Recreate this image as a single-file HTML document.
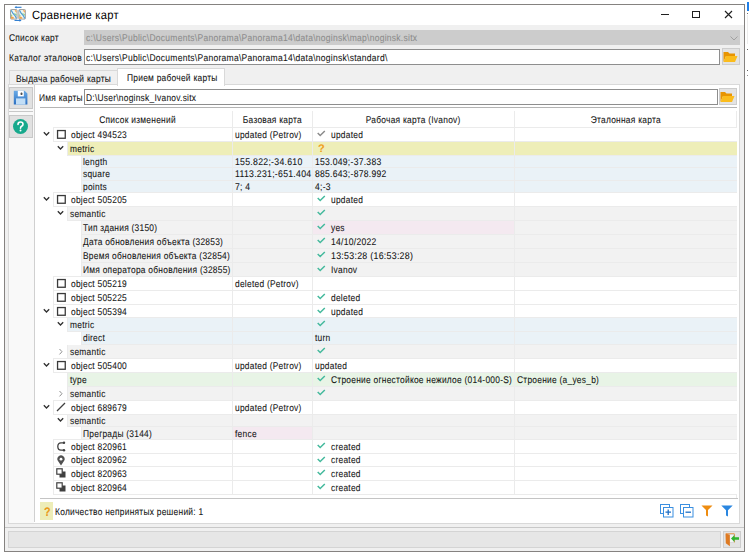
<!DOCTYPE html>
<html><head><meta charset="utf-8"><style>
html,body{margin:0;padding:0;width:750px;height:556px;overflow:hidden;background:#fff;position:relative}
body{font-family:"Liberation Sans", sans-serif;font-size:9.75px;letter-spacing:0.3px;color:#141414;-webkit-text-stroke-width:0.08px;text-rendering:geometricPrecision}
div,svg{position:absolute}
.t{position:absolute;white-space:nowrap;margin-top:2px}
.t>i{font-style:normal;display:inline-block;transform:scaleX(var(--sx,.86));transform-origin:0 50%}
.c>i{transform-origin:50% 50%}
</style></head><body>
<!-- window -->
<div style="left:4px;top:4px;width:741px;height:548px;box-sizing:border-box;border:1px solid #858280;background:#f0f0f0"></div>
<div style="left:5px;top:5px;width:739px;height:20px;background:#fff"></div>
<div style="left:747px;top:2px;width:1.5px;height:9px;background:#1f7fe8"></div>
<div style="left:747px;top:13px;width:1px;height:1px;background:#707070"></div>
<div style="left:747px;top:15px;width:1px;height:29px;background:#ececec"></div>
<div style="left:747px;top:49px;width:1px;height:1px;background:#606060"></div>
<div style="left:747px;top:70px;width:1px;height:1px;background:#606060"></div>
<div style="left:747px;top:75px;width:1px;height:1px;background:#909090"></div>
<!-- title icon -->
<svg width="18" height="18" viewBox="0 0 18 18" style="left:9px;top:6px">
 <defs><g id="mp"><rect x="0.5" y="0.5" width="6.6" height="9.6" rx="0.8" fill="#eef4ee" stroke="#9a9a9a" stroke-width="0.9"/>
 <path d="M1.2 1.2 L3 4.5 L5 6.5 L6.5 9.5" stroke="#4a9ad8" stroke-width="1.2" fill="none"/>
 <path d="M4.5 1.2 L6.5 1.2 L6.5 4 Z" fill="#f3a04a"/>
 <path d="M1 7 L4 8.5 L3.5 9.8 L1 9.8 Z" fill="#f3a04a"/>
 <path d="M3.5 4 L6.5 5 L6.5 7 Z M1 5 L2.5 7 L1 7.5 Z" fill="#8cc98c"/></g></defs>
 <use href="#mp" x="1" y="3"/><use href="#mp" x="9.3" y="3"/>
 <path d="M6.5 1.3 L12.5 1.3" stroke="#2a7bd0" stroke-width="1.1"/><path d="M5.5 1.3 L7.5 0 L7.5 2.6 Z" fill="#2a7bd0"/>
 <path d="M5.5 14.4 L11.5 14.4" stroke="#2a7bd0" stroke-width="1.1"/><path d="M12.5 14.4 L10.5 13.1 L10.5 15.7 Z" fill="#2a7bd0"/>
</svg>
<div class="t" style="left:32px;top:4px;font-size:12px;--sx:.93;color:#000;line-height:19px;-webkit-text-stroke-width:0"><i>Сравнение карт</i></div>
<!-- caption buttons -->
<div style="left:661px;top:14px;width:8px;height:1px;background:#202020"></div>
<div style="left:692px;top:11px;width:8px;height:7px;box-sizing:border-box;border:1.2px solid #202020"></div>
<svg width="9" height="9" viewBox="0 0 9 9" style="left:724px;top:10px"><path d="M1 1 L8 8 M8 1 L1 8" stroke="#202020" stroke-width="1.15"/></svg>

<!-- Список карт -->
<div class="t" style="left:9px;top:30.4px;line-height:14px"><i>Список карт</i></div>
<div style="left:84px;top:30px;width:656px;height:15px;background:#cccccc"></div>
<div class="t" style="left:86px;top:30.4px;line-height:14px;color:#8c8c8c;--sx:.874"><i>c:\Users\Public\Documents\Panorama\Panorama14\data\noginsk\map\noginsk.sitx</i></div>
<svg width="8" height="5" viewBox="0 0 8 5" style="left:730px;top:36px"><polyline points="0.5,0.5 4,4 7.5,0.5" fill="none" stroke="#a0a0a0" stroke-width="1"/></svg>

<!-- Каталог эталонов -->
<div class="t" style="left:9px;top:50px;line-height:14px"><i>Каталог эталонов</i></div>
<div style="left:84px;top:49px;width:636px;height:16px;box-sizing:border-box;border:1px solid #8e8e8e;background:#fff"></div>
<div class="t" style="left:86px;top:50px;line-height:14px;--sx:.874"><i>c:\Users\Public\Documents\Panorama\Panorama14\data\noginsk\standard\</i></div>
<div style="left:722px;top:48px;width:18px;height:17px;box-sizing:border-box;border:1px solid #cdcdcd;background:#e3e3e3"></div>
<svg width="15" height="12" viewBox="0 0 15 12" style="left:723px;top:51px"><path d="M0.5 1 L5 1 L6.5 2.5 L12 2.5 L12 5 L3 5 L0.5 11 Z" fill="#e89400"/><path d="M3 5 L14.5 5 L12 11 L0.5 11 Z" fill="#fbbc1c"/></svg>

<!-- tabs -->
<div style="left:9px;top:70px;width:109px;height:15px;box-sizing:border-box;border:1px solid #d9d9d9;border-bottom:none;background:#f0f0f0"></div>
<div class="t" style="left:16px;top:71px;line-height:14px"><i>Выдача рабочей карты</i></div>
<div style="left:8px;top:84px;width:732px;height:440px;box-sizing:border-box;border:1px solid #d9d9d9;background:#fff"></div>
<div style="left:117px;top:68px;width:108px;height:18px;box-sizing:border-box;border:1px solid #d9d9d9;border-bottom:none;background:#fff"></div>
<div class="t" style="left:127px;top:70px;line-height:14px"><i>Прием рабочей карты</i></div>

<!-- left toolbar -->
<div style="left:9px;top:85px;width:25px;height:438px;background:#f9f9f9"></div>
<div style="left:34px;top:85px;width:1px;height:437px;background:#d0d0d0"></div>
<div style="left:9px;top:87px;width:24px;height:22px;box-sizing:border-box;border:1px solid #c8c8c8;background:#e1e1e1"></div>
<svg width="16" height="16" viewBox="0 0 16 16" style="left:13px;top:90px"><defs><linearGradient id="fg" x1="0" y1="0" x2="0" y2="1"><stop offset="0" stop-color="#69aae6"/><stop offset="1" stop-color="#2c70c2"/></linearGradient></defs><path d="M0.8 0.8 H11.6 L14.4 3.6 V14.6 H0.8 Z" fill="url(#fg)"/><rect x="4.8" y="0.8" width="6" height="5.6" fill="#fff"/><rect x="7.6" y="2.6" width="1.8" height="2.4" rx="0.6" fill="#505050"/><rect x="3" y="8.4" width="9.4" height="6.2" fill="#c2def6"/></svg>
<div style="left:9px;top:111px;width:24px;height:1px;background:#c8c8c8"></div>
<div style="left:9px;top:115px;width:24px;height:23px;box-sizing:border-box;border:1px solid #c8c8c8;background:#e1e1e1"></div>
<div style="left:13px;top:119px;width:15px;height:15px;border-radius:50%;background:#17a98c"></div>
<svg width="15" height="15" viewBox="0 0 15 15" style="left:13px;top:119px"><path d="M5 5.4 Q5 3 7.5 3 Q10 3 10 5.2 Q10 6.6 8.6 7.3 Q7.5 7.9 7.5 9.2" fill="none" stroke="#fff" stroke-width="1.6" stroke-linecap="round"/><circle cx="7.5" cy="11.6" r="1" fill="#fff"/></svg>

<!-- Имя карты -->
<div class="t" style="left:39px;top:90px;line-height:14px"><i>Имя карты</i></div>
<div style="left:84px;top:89px;width:634px;height:16px;box-sizing:border-box;border:1px solid #8e8e8e;background:#fff"></div>
<div class="t" style="left:86px;top:90px;line-height:14px"><i>D:\User\noginsk_Ivanov.sitx</i></div>
<div style="left:719px;top:88px;width:18px;height:17px;box-sizing:border-box;border:1px solid #cdcdcd;background:#e3e3e3"></div>
<svg width="15" height="12" viewBox="0 0 15 12" style="left:720px;top:91px"><path d="M0.5 1 L5 1 L6.5 2.5 L12 2.5 L12 5 L3 5 L0.5 11 Z" fill="#e89400"/><path d="M3 5 L14.5 5 L12 11 L0.5 11 Z" fill="#fbbc1c"/></svg>
<div style="left:40px;top:107px;width:697px;height:1px;background:#b4b4b4"></div>

<!-- grid header -->
<div style="left:232px;top:111px;width:1px;height:16px;background:#ebebeb"></div>
<div style="left:312px;top:111px;width:1px;height:16px;background:#ebebeb"></div>
<div style="left:514px;top:111px;width:1px;height:16px;background:#ebebeb"></div>
<div style="left:736px;top:111px;width:1px;height:387px;background:#ebebeb"></div>
<div style="left:53px;top:127px;width:684px;height:1px;background:#ebebeb"></div>
<div class="t c" style="left:41.5px;width:192px;text-align:center;top:112px;line-height:14px"><i>Список изменений</i></div>
<div class="t c" style="left:233px;width:79px;text-align:center;top:112px;line-height:14px"><i>Базовая карта</i></div>
<div class="t c" style="left:313px;width:201px;text-align:center;top:112px;line-height:14px"><i>Рабочая карта (Ivanov)</i></div>
<div class="t c" style="left:515px;width:221px;text-align:center;top:112px;line-height:14px"><i>Эталонная карта</i></div>

<div style="position:absolute;left:53px;top:128px;width:684px;height:14px;background:#ffffff;border-left:1px solid #ebebeb;border-bottom:1px solid #ebebeb;box-sizing:border-box"></div>
<div style="position:absolute;left:53px;top:127px;width:684px;height:1px;background:#ebebeb"></div>
<div style="position:absolute;left:232px;top:128px;width:1px;height:14px;background:#ebebeb"></div>
<div style="position:absolute;left:312px;top:128px;width:1px;height:14px;background:#ebebeb"></div>
<div style="position:absolute;left:514px;top:128px;width:1px;height:14px;background:#ebebeb"></div>
<svg width="8" height="6" viewBox="0 0 8 6" style="position:absolute;left:43px;top:131.0px"><polyline points="0.8,1.2 3.5,4 6.2,1.2" fill="none" stroke="#303030" stroke-width="1.3"/></svg>
<svg width="10" height="10" viewBox="0 0 10 10" style="position:absolute;left:56px;top:129.3px"><rect x="1.55" y="1.55" width="7.7" height="7.7" fill="none" stroke="#3a3a3a" stroke-width="1.3"/></svg>
<div class="t" style="left:71px;top:127px;line-height:14px"><i>object 494523</i></div>
<div class="t" style="left:235px;top:127px;line-height:14px"><i>updated (Petrov)</i></div>
<svg width="9" height="7" viewBox="0 0 9 7" style="position:absolute;left:317px;top:130.4px"><polyline points="0.7,3 3.2,5.5 7.8,0.9" fill="none" stroke="#8a8a8a" stroke-width="1.45"/></svg>
<div class="t" style="left:331px;top:127px;line-height:14px"><i>updated</i></div>
<div style="position:absolute;left:67px;top:142px;width:670px;height:14px;background:#eeeeb8;border-left:1px solid #ebebeb;border-bottom:1px solid #ebebeb;box-sizing:border-box"></div>
<div style="position:absolute;left:232px;top:142px;width:1px;height:14px;background:#ebebeb"></div>
<div style="position:absolute;left:312px;top:142px;width:1px;height:14px;background:#ebebeb"></div>
<div style="position:absolute;left:514px;top:142px;width:1px;height:14px;background:#ebebeb"></div>
<svg width="8" height="6" viewBox="0 0 8 6" style="position:absolute;left:57px;top:145.0px"><polyline points="0.8,1.2 3.5,4 6.2,1.2" fill="none" stroke="#303030" stroke-width="1.3"/></svg>
<div class="t" style="left:70px;top:141px;line-height:14px"><i>metric</i></div>
<div style="position:absolute;left:318px;top:142px;height:14px;line-height:14px;font-weight:bold;font-size:11px;color:#f0a020">?</div>
<div style="position:absolute;left:81px;top:156px;width:656px;height:12px;background:#eaf2f7;border-left:1px solid #ebebeb;border-bottom:1px solid #ebebeb;box-sizing:border-box"></div>
<div style="position:absolute;left:232px;top:156px;width:1px;height:12px;background:#ebebeb"></div>
<div style="position:absolute;left:312px;top:156px;width:1px;height:12px;background:#ebebeb"></div>
<div style="position:absolute;left:514px;top:156px;width:1px;height:12px;background:#ebebeb"></div>
<div class="t" style="left:83px;top:154px;line-height:14px"><i>length</i></div>
<div class="t" style="left:235px;top:154px;line-height:14px"><i style="--sx:0.895">155.822;-34.610</i></div>
<div class="t" style="left:315px;top:154px;line-height:14px"><i style="--sx:0.88">153.049;-37.383</i></div>
<div style="position:absolute;left:81px;top:168px;width:656px;height:13px;background:#eaf2f7;border-left:1px solid #ebebeb;border-bottom:1px solid #ebebeb;box-sizing:border-box"></div>
<div style="position:absolute;left:232px;top:168px;width:1px;height:13px;background:#ebebeb"></div>
<div style="position:absolute;left:312px;top:168px;width:1px;height:13px;background:#ebebeb"></div>
<div style="position:absolute;left:514px;top:168px;width:1px;height:13px;background:#ebebeb"></div>
<div class="t" style="left:83px;top:166px;line-height:14px"><i>square</i></div>
<div class="t" style="left:235px;top:166px;line-height:14px"><i style="--sx:0.893">1113.231;-651.404</i></div>
<div class="t" style="left:315px;top:166px;line-height:14px"><i style="--sx:0.88">885.643;-878.992</i></div>
<div style="position:absolute;left:81px;top:181px;width:656px;height:12px;background:#eaf2f7;border-left:1px solid #ebebeb;border-bottom:1px solid #ebebeb;box-sizing:border-box"></div>
<div style="position:absolute;left:232px;top:181px;width:1px;height:12px;background:#ebebeb"></div>
<div style="position:absolute;left:312px;top:181px;width:1px;height:12px;background:#ebebeb"></div>
<div style="position:absolute;left:514px;top:181px;width:1px;height:12px;background:#ebebeb"></div>
<div class="t" style="left:83px;top:179px;line-height:14px"><i>points</i></div>
<div class="t" style="left:235px;top:179px;line-height:14px"><i style="--sx:0.88">7; 4</i></div>
<div class="t" style="left:315px;top:179px;line-height:14px"><i style="--sx:0.88">4;-3</i></div>
<div style="position:absolute;left:53px;top:193px;width:684px;height:14px;background:#ffffff;border-left:1px solid #ebebeb;border-bottom:1px solid #ebebeb;box-sizing:border-box"></div>
<div style="position:absolute;left:53px;top:192px;width:684px;height:1px;background:#ebebeb"></div>
<div style="position:absolute;left:232px;top:193px;width:1px;height:14px;background:#ebebeb"></div>
<div style="position:absolute;left:312px;top:193px;width:1px;height:14px;background:#ebebeb"></div>
<div style="position:absolute;left:514px;top:193px;width:1px;height:14px;background:#ebebeb"></div>
<svg width="8" height="6" viewBox="0 0 8 6" style="position:absolute;left:43px;top:196.0px"><polyline points="0.8,1.2 3.5,4 6.2,1.2" fill="none" stroke="#303030" stroke-width="1.3"/></svg>
<svg width="10" height="10" viewBox="0 0 10 10" style="position:absolute;left:56px;top:194.3px"><rect x="1.55" y="1.55" width="7.7" height="7.7" fill="none" stroke="#3a3a3a" stroke-width="1.3"/></svg>
<div class="t" style="left:71px;top:192px;line-height:14px"><i>object 505205</i></div>
<svg width="9" height="7" viewBox="0 0 9 7" style="position:absolute;left:317px;top:195.4px"><polyline points="0.7,3 3.2,5.5 7.8,0.9" fill="none" stroke="#43b99c" stroke-width="1.45"/></svg>
<div class="t" style="left:331px;top:192px;line-height:14px"><i>updated</i></div>
<div style="position:absolute;left:67px;top:207px;width:670px;height:14px;background:#f2f2f2;border-left:1px solid #ebebeb;border-bottom:1px solid #ebebeb;box-sizing:border-box"></div>
<div style="position:absolute;left:232px;top:207px;width:1px;height:14px;background:#ebebeb"></div>
<div style="position:absolute;left:312px;top:207px;width:1px;height:14px;background:#ebebeb"></div>
<div style="position:absolute;left:514px;top:207px;width:1px;height:14px;background:#ebebeb"></div>
<svg width="8" height="6" viewBox="0 0 8 6" style="position:absolute;left:57px;top:210.0px"><polyline points="0.8,1.2 3.5,4 6.2,1.2" fill="none" stroke="#303030" stroke-width="1.3"/></svg>
<div class="t" style="left:70px;top:206px;line-height:14px"><i>semantic</i></div>
<svg width="9" height="7" viewBox="0 0 9 7" style="position:absolute;left:317px;top:209.4px"><polyline points="0.7,3 3.2,5.5 7.8,0.9" fill="none" stroke="#43b99c" stroke-width="1.45"/></svg>
<div style="position:absolute;left:81px;top:221px;width:656px;height:14px;background:#f2f2f2;border-left:1px solid #ebebeb;border-bottom:1px solid #ebebeb;box-sizing:border-box"></div>
<div style="position:absolute;left:313px;top:221px;width:201px;height:13px;background:#f4e9f0"></div>
<div style="position:absolute;left:232px;top:221px;width:1px;height:14px;background:#ebebeb"></div>
<div style="position:absolute;left:312px;top:221px;width:1px;height:14px;background:#ebebeb"></div>
<div style="position:absolute;left:514px;top:221px;width:1px;height:14px;background:#ebebeb"></div>
<div class="t" style="left:83px;top:220px;line-height:14px"><i>Тип здания (3150)</i></div>
<svg width="9" height="7" viewBox="0 0 9 7" style="position:absolute;left:317px;top:223.4px"><polyline points="0.7,3 3.2,5.5 7.8,0.9" fill="none" stroke="#43b99c" stroke-width="1.45"/></svg>
<div class="t" style="left:331px;top:220px;line-height:14px"><i>yes</i></div>
<div style="position:absolute;left:81px;top:235px;width:656px;height:14px;background:#f2f2f2;border-left:1px solid #ebebeb;border-bottom:1px solid #ebebeb;box-sizing:border-box"></div>
<div style="position:absolute;left:232px;top:235px;width:1px;height:14px;background:#ebebeb"></div>
<div style="position:absolute;left:312px;top:235px;width:1px;height:14px;background:#ebebeb"></div>
<div style="position:absolute;left:514px;top:235px;width:1px;height:14px;background:#ebebeb"></div>
<div class="t" style="left:83px;top:234px;line-height:14px"><i>Дата обновления объекта (32853)</i></div>
<svg width="9" height="7" viewBox="0 0 9 7" style="position:absolute;left:317px;top:237.4px"><polyline points="0.7,3 3.2,5.5 7.8,0.9" fill="none" stroke="#43b99c" stroke-width="1.45"/></svg>
<div class="t" style="left:331px;top:234px;line-height:14px"><i style="--sx:0.88">14/10/2022</i></div>
<div style="position:absolute;left:81px;top:249px;width:656px;height:14px;background:#f2f2f2;border-left:1px solid #ebebeb;border-bottom:1px solid #ebebeb;box-sizing:border-box"></div>
<div style="position:absolute;left:232px;top:249px;width:1px;height:14px;background:#ebebeb"></div>
<div style="position:absolute;left:312px;top:249px;width:1px;height:14px;background:#ebebeb"></div>
<div style="position:absolute;left:514px;top:249px;width:1px;height:14px;background:#ebebeb"></div>
<div class="t" style="left:83px;top:248px;line-height:14px"><i>Время обновления объекта (32854)</i></div>
<svg width="9" height="7" viewBox="0 0 9 7" style="position:absolute;left:317px;top:251.4px"><polyline points="0.7,3 3.2,5.5 7.8,0.9" fill="none" stroke="#43b99c" stroke-width="1.45"/></svg>
<div class="t" style="left:331px;top:248px;line-height:14px"><i style="--sx:0.905">13:53:28 (16:53:28)</i></div>
<div style="position:absolute;left:81px;top:263px;width:656px;height:14px;background:#f2f2f2;border-left:1px solid #ebebeb;border-bottom:1px solid #ebebeb;box-sizing:border-box"></div>
<div style="position:absolute;left:232px;top:263px;width:1px;height:14px;background:#ebebeb"></div>
<div style="position:absolute;left:312px;top:263px;width:1px;height:14px;background:#ebebeb"></div>
<div style="position:absolute;left:514px;top:263px;width:1px;height:14px;background:#ebebeb"></div>
<div class="t" style="left:83px;top:262px;line-height:14px"><i>Имя оператора обновления (32855)</i></div>
<svg width="9" height="7" viewBox="0 0 9 7" style="position:absolute;left:317px;top:265.4px"><polyline points="0.7,3 3.2,5.5 7.8,0.9" fill="none" stroke="#43b99c" stroke-width="1.45"/></svg>
<div class="t" style="left:331px;top:262px;line-height:14px"><i>Ivanov</i></div>
<div style="position:absolute;left:53px;top:277px;width:684px;height:14px;background:#ffffff;border-left:1px solid #ebebeb;border-bottom:1px solid #ebebeb;box-sizing:border-box"></div>
<div style="position:absolute;left:53px;top:276px;width:684px;height:1px;background:#ebebeb"></div>
<div style="position:absolute;left:232px;top:277px;width:1px;height:14px;background:#ebebeb"></div>
<div style="position:absolute;left:312px;top:277px;width:1px;height:14px;background:#ebebeb"></div>
<div style="position:absolute;left:514px;top:277px;width:1px;height:14px;background:#ebebeb"></div>
<svg width="10" height="10" viewBox="0 0 10 10" style="position:absolute;left:56px;top:278.3px"><rect x="1.55" y="1.55" width="7.7" height="7.7" fill="none" stroke="#3a3a3a" stroke-width="1.3"/></svg>
<div class="t" style="left:71px;top:276px;line-height:14px"><i>object 505219</i></div>
<div class="t" style="left:235px;top:276px;line-height:14px"><i>deleted (Petrov)</i></div>
<div style="position:absolute;left:53px;top:291px;width:684px;height:14px;background:#ffffff;border-left:1px solid #ebebeb;border-bottom:1px solid #ebebeb;box-sizing:border-box"></div>
<div style="position:absolute;left:53px;top:290px;width:684px;height:1px;background:#ebebeb"></div>
<div style="position:absolute;left:232px;top:291px;width:1px;height:14px;background:#ebebeb"></div>
<div style="position:absolute;left:312px;top:291px;width:1px;height:14px;background:#ebebeb"></div>
<div style="position:absolute;left:514px;top:291px;width:1px;height:14px;background:#ebebeb"></div>
<svg width="10" height="10" viewBox="0 0 10 10" style="position:absolute;left:56px;top:292.3px"><rect x="1.55" y="1.55" width="7.7" height="7.7" fill="none" stroke="#3a3a3a" stroke-width="1.3"/></svg>
<div class="t" style="left:71px;top:290px;line-height:14px"><i>object 505225</i></div>
<svg width="9" height="7" viewBox="0 0 9 7" style="position:absolute;left:317px;top:293.4px"><polyline points="0.7,3 3.2,5.5 7.8,0.9" fill="none" stroke="#43b99c" stroke-width="1.45"/></svg>
<div class="t" style="left:331px;top:290px;line-height:14px"><i>deleted</i></div>
<div style="position:absolute;left:53px;top:305px;width:684px;height:13px;background:#ffffff;border-left:1px solid #ebebeb;border-bottom:1px solid #ebebeb;box-sizing:border-box"></div>
<div style="position:absolute;left:53px;top:304px;width:684px;height:1px;background:#ebebeb"></div>
<div style="position:absolute;left:232px;top:305px;width:1px;height:13px;background:#ebebeb"></div>
<div style="position:absolute;left:312px;top:305px;width:1px;height:13px;background:#ebebeb"></div>
<div style="position:absolute;left:514px;top:305px;width:1px;height:13px;background:#ebebeb"></div>
<svg width="8" height="6" viewBox="0 0 8 6" style="position:absolute;left:43px;top:307.5px"><polyline points="0.8,1.2 3.5,4 6.2,1.2" fill="none" stroke="#303030" stroke-width="1.3"/></svg>
<svg width="10" height="10" viewBox="0 0 10 10" style="position:absolute;left:56px;top:305.8px"><rect x="1.55" y="1.55" width="7.7" height="7.7" fill="none" stroke="#3a3a3a" stroke-width="1.3"/></svg>
<div class="t" style="left:71px;top:304px;line-height:14px"><i>object 505394</i></div>
<svg width="9" height="7" viewBox="0 0 9 7" style="position:absolute;left:317px;top:306.9px"><polyline points="0.7,3 3.2,5.5 7.8,0.9" fill="none" stroke="#43b99c" stroke-width="1.45"/></svg>
<div class="t" style="left:331px;top:304px;line-height:14px"><i>updated</i></div>
<div style="position:absolute;left:67px;top:318px;width:670px;height:14px;background:#eaf2f7;border-left:1px solid #ebebeb;border-bottom:1px solid #ebebeb;box-sizing:border-box"></div>
<div style="position:absolute;left:232px;top:318px;width:1px;height:14px;background:#ebebeb"></div>
<div style="position:absolute;left:312px;top:318px;width:1px;height:14px;background:#ebebeb"></div>
<div style="position:absolute;left:514px;top:318px;width:1px;height:14px;background:#ebebeb"></div>
<svg width="8" height="6" viewBox="0 0 8 6" style="position:absolute;left:57px;top:321.0px"><polyline points="0.8,1.2 3.5,4 6.2,1.2" fill="none" stroke="#303030" stroke-width="1.3"/></svg>
<div class="t" style="left:70px;top:317px;line-height:14px"><i>metric</i></div>
<svg width="9" height="7" viewBox="0 0 9 7" style="position:absolute;left:317px;top:320.4px"><polyline points="0.7,3 3.2,5.5 7.8,0.9" fill="none" stroke="#43b99c" stroke-width="1.45"/></svg>
<div style="position:absolute;left:81px;top:332px;width:656px;height:13px;background:#eaf2f7;border-left:1px solid #ebebeb;border-bottom:1px solid #ebebeb;box-sizing:border-box"></div>
<div style="position:absolute;left:232px;top:332px;width:1px;height:13px;background:#ebebeb"></div>
<div style="position:absolute;left:312px;top:332px;width:1px;height:13px;background:#ebebeb"></div>
<div style="position:absolute;left:514px;top:332px;width:1px;height:13px;background:#ebebeb"></div>
<div class="t" style="left:83px;top:330px;line-height:14px"><i>direct</i></div>
<div class="t" style="left:315px;top:330px;line-height:14px"><i>turn</i></div>
<div style="position:absolute;left:67px;top:345px;width:670px;height:14px;background:#f2f2f2;border-left:1px solid #ebebeb;border-bottom:1px solid #ebebeb;box-sizing:border-box"></div>
<div style="position:absolute;left:232px;top:345px;width:1px;height:14px;background:#ebebeb"></div>
<div style="position:absolute;left:312px;top:345px;width:1px;height:14px;background:#ebebeb"></div>
<div style="position:absolute;left:514px;top:345px;width:1px;height:14px;background:#ebebeb"></div>
<svg width="6" height="8" viewBox="0 0 6 8" style="position:absolute;left:58px;top:348.0px"><polyline points="1.5,1 4,3.7 1.5,6.4" fill="none" stroke="#909090" stroke-width="1"/></svg>
<div class="t" style="left:70px;top:344px;line-height:14px"><i>semantic</i></div>
<svg width="9" height="7" viewBox="0 0 9 7" style="position:absolute;left:317px;top:347.4px"><polyline points="0.7,3 3.2,5.5 7.8,0.9" fill="none" stroke="#43b99c" stroke-width="1.45"/></svg>
<div style="position:absolute;left:53px;top:359px;width:684px;height:14px;background:#ffffff;border-left:1px solid #ebebeb;border-bottom:1px solid #ebebeb;box-sizing:border-box"></div>
<div style="position:absolute;left:53px;top:358px;width:684px;height:1px;background:#ebebeb"></div>
<div style="position:absolute;left:232px;top:359px;width:1px;height:14px;background:#ebebeb"></div>
<div style="position:absolute;left:312px;top:359px;width:1px;height:14px;background:#ebebeb"></div>
<div style="position:absolute;left:514px;top:359px;width:1px;height:14px;background:#ebebeb"></div>
<svg width="8" height="6" viewBox="0 0 8 6" style="position:absolute;left:43px;top:362.0px"><polyline points="0.8,1.2 3.5,4 6.2,1.2" fill="none" stroke="#303030" stroke-width="1.3"/></svg>
<svg width="10" height="10" viewBox="0 0 10 10" style="position:absolute;left:56px;top:360.3px"><rect x="1.55" y="1.55" width="7.7" height="7.7" fill="none" stroke="#3a3a3a" stroke-width="1.3"/></svg>
<div class="t" style="left:71px;top:358px;line-height:14px"><i>object 505400</i></div>
<div class="t" style="left:235px;top:358px;line-height:14px"><i>updated (Petrov)</i></div>
<div class="t" style="left:315px;top:358px;line-height:14px"><i>updated</i></div>
<div style="position:absolute;left:67px;top:373px;width:670px;height:14px;background:#e8f4e6;border-left:1px solid #ebebeb;border-bottom:1px solid #ebebeb;box-sizing:border-box"></div>
<div style="position:absolute;left:232px;top:373px;width:1px;height:14px;background:#ebebeb"></div>
<div style="position:absolute;left:312px;top:373px;width:1px;height:14px;background:#ebebeb"></div>
<div style="position:absolute;left:514px;top:373px;width:1px;height:14px;background:#ebebeb"></div>
<div class="t" style="left:70px;top:372px;line-height:14px"><i>type</i></div>
<svg width="9" height="7" viewBox="0 0 9 7" style="position:absolute;left:317px;top:375.4px"><polyline points="0.7,3 3.2,5.5 7.8,0.9" fill="none" stroke="#43b99c" stroke-width="1.45"/></svg>
<div class="t" style="left:331px;top:372px;line-height:14px"><i>Строение огнестойкое нежилое (014-000-S)</i></div>
<div class="t" style="left:517px;top:372px;line-height:14px"><i>Строение (a_yes_b)</i></div>
<div style="position:absolute;left:67px;top:387px;width:670px;height:14px;background:#f2f2f2;border-left:1px solid #ebebeb;border-bottom:1px solid #ebebeb;box-sizing:border-box"></div>
<div style="position:absolute;left:232px;top:387px;width:1px;height:14px;background:#ebebeb"></div>
<div style="position:absolute;left:312px;top:387px;width:1px;height:14px;background:#ebebeb"></div>
<div style="position:absolute;left:514px;top:387px;width:1px;height:14px;background:#ebebeb"></div>
<svg width="6" height="8" viewBox="0 0 6 8" style="position:absolute;left:58px;top:390.0px"><polyline points="1.5,1 4,3.7 1.5,6.4" fill="none" stroke="#909090" stroke-width="1"/></svg>
<div class="t" style="left:70px;top:386px;line-height:14px"><i>semantic</i></div>
<svg width="9" height="7" viewBox="0 0 9 7" style="position:absolute;left:317px;top:389.4px"><polyline points="0.7,3 3.2,5.5 7.8,0.9" fill="none" stroke="#43b99c" stroke-width="1.45"/></svg>
<div style="position:absolute;left:53px;top:401px;width:684px;height:14px;background:#ffffff;border-left:1px solid #ebebeb;border-bottom:1px solid #ebebeb;box-sizing:border-box"></div>
<div style="position:absolute;left:53px;top:400px;width:684px;height:1px;background:#ebebeb"></div>
<div style="position:absolute;left:232px;top:401px;width:1px;height:14px;background:#ebebeb"></div>
<div style="position:absolute;left:312px;top:401px;width:1px;height:14px;background:#ebebeb"></div>
<div style="position:absolute;left:514px;top:401px;width:1px;height:14px;background:#ebebeb"></div>
<svg width="8" height="6" viewBox="0 0 8 6" style="position:absolute;left:43px;top:404.0px"><polyline points="0.8,1.2 3.5,4 6.2,1.2" fill="none" stroke="#303030" stroke-width="1.3"/></svg>
<svg width="10" height="10" viewBox="0 0 10 10" style="position:absolute;left:56px;top:402px"><line x1="1" y1="9" x2="9" y2="1" stroke="#404040" stroke-width="1.3"/></svg>
<div class="t" style="left:71px;top:400px;line-height:14px"><i>object 689679</i></div>
<div class="t" style="left:235px;top:400px;line-height:14px"><i>updated (Petrov)</i></div>
<div style="position:absolute;left:67px;top:415px;width:670px;height:12px;background:#f2f2f2;border-left:1px solid #ebebeb;border-bottom:1px solid #ebebeb;box-sizing:border-box"></div>
<div style="position:absolute;left:232px;top:415px;width:1px;height:12px;background:#ebebeb"></div>
<div style="position:absolute;left:312px;top:415px;width:1px;height:12px;background:#ebebeb"></div>
<div style="position:absolute;left:514px;top:415px;width:1px;height:12px;background:#ebebeb"></div>
<svg width="8" height="6" viewBox="0 0 8 6" style="position:absolute;left:57px;top:417.0px"><polyline points="0.8,1.2 3.5,4 6.2,1.2" fill="none" stroke="#303030" stroke-width="1.3"/></svg>
<div class="t" style="left:70px;top:413px;line-height:14px"><i>semantic</i></div>
<div style="position:absolute;left:81px;top:427px;width:656px;height:13px;background:#f2f2f2;border-left:1px solid #ebebeb;border-bottom:1px solid #ebebeb;box-sizing:border-box"></div>
<div style="position:absolute;left:233px;top:427px;width:79px;height:12px;background:#f4e9f0"></div>
<div style="position:absolute;left:232px;top:427px;width:1px;height:13px;background:#ebebeb"></div>
<div style="position:absolute;left:312px;top:427px;width:1px;height:13px;background:#ebebeb"></div>
<div style="position:absolute;left:514px;top:427px;width:1px;height:13px;background:#ebebeb"></div>
<div class="t" style="left:83px;top:426px;line-height:14px"><i>Преграды (3144)</i></div>
<div class="t" style="left:235px;top:426px;line-height:14px"><i>fence</i></div>
<div style="position:absolute;left:53px;top:440px;width:684px;height:14px;background:#ffffff;border-left:1px solid #ebebeb;border-bottom:1px solid #ebebeb;box-sizing:border-box"></div>
<div style="position:absolute;left:53px;top:439px;width:684px;height:1px;background:#ebebeb"></div>
<div style="position:absolute;left:232px;top:440px;width:1px;height:14px;background:#ebebeb"></div>
<div style="position:absolute;left:312px;top:440px;width:1px;height:14px;background:#ebebeb"></div>
<div style="position:absolute;left:514px;top:440px;width:1px;height:14px;background:#ebebeb"></div>
<svg width="10" height="11" viewBox="0 0 10 11" style="position:absolute;left:56px;top:441px"><path d="M8 1.8 L5 1.8 Q1.8 2 1.8 5.5 Q1.8 9 5 9.2 L8 9.2" fill="none" stroke="#404040" stroke-width="1.3"/><circle cx="8" cy="1.8" r="1.2" fill="#404040"/><circle cx="8" cy="9.2" r="1.2" fill="#404040"/></svg>
<div class="t" style="left:71px;top:439px;line-height:14px"><i>object 820961</i></div>
<svg width="9" height="7" viewBox="0 0 9 7" style="position:absolute;left:317px;top:442.4px"><polyline points="0.7,3 3.2,5.5 7.8,0.9" fill="none" stroke="#43b99c" stroke-width="1.45"/></svg>
<div class="t" style="left:331px;top:439px;line-height:14px"><i>created</i></div>
<div style="position:absolute;left:53px;top:454px;width:684px;height:13px;background:#ffffff;border-left:1px solid #ebebeb;border-bottom:1px solid #ebebeb;box-sizing:border-box"></div>
<div style="position:absolute;left:53px;top:453px;width:684px;height:1px;background:#ebebeb"></div>
<div style="position:absolute;left:232px;top:454px;width:1px;height:13px;background:#ebebeb"></div>
<div style="position:absolute;left:312px;top:454px;width:1px;height:13px;background:#ebebeb"></div>
<div style="position:absolute;left:514px;top:454px;width:1px;height:13px;background:#ebebeb"></div>
<svg width="10" height="11" viewBox="0 0 10 11" style="position:absolute;left:56px;top:455px"><path d="M5 10.6 L2 6 A3.6 3.6 0 1 1 8 6 Z" fill="#505050"/><circle cx="5" cy="4.2" r="1.4" fill="#fff"/></svg>
<div class="t" style="left:71px;top:452px;line-height:14px"><i>object 820962</i></div>
<svg width="9" height="7" viewBox="0 0 9 7" style="position:absolute;left:317px;top:455.9px"><polyline points="0.7,3 3.2,5.5 7.8,0.9" fill="none" stroke="#43b99c" stroke-width="1.45"/></svg>
<div class="t" style="left:331px;top:452px;line-height:14px"><i>created</i></div>
<div style="position:absolute;left:53px;top:467px;width:684px;height:14px;background:#ffffff;border-left:1px solid #ebebeb;border-bottom:1px solid #ebebeb;box-sizing:border-box"></div>
<div style="position:absolute;left:53px;top:466px;width:684px;height:1px;background:#ebebeb"></div>
<div style="position:absolute;left:232px;top:467px;width:1px;height:14px;background:#ebebeb"></div>
<div style="position:absolute;left:312px;top:467px;width:1px;height:14px;background:#ebebeb"></div>
<div style="position:absolute;left:514px;top:467px;width:1px;height:14px;background:#ebebeb"></div>
<svg width="10" height="10" viewBox="0 0 10 10" style="position:absolute;left:56px;top:468px"><rect x="3.5" y="3.5" width="6" height="6" fill="#404040"/><rect x="0.8" y="0.8" width="5.4" height="5.4" fill="#fff" stroke="#404040" stroke-width="1.2"/></svg>
<div class="t" style="left:71px;top:466px;line-height:14px"><i>object 820963</i></div>
<svg width="9" height="7" viewBox="0 0 9 7" style="position:absolute;left:317px;top:469.4px"><polyline points="0.7,3 3.2,5.5 7.8,0.9" fill="none" stroke="#43b99c" stroke-width="1.45"/></svg>
<div class="t" style="left:331px;top:466px;line-height:14px"><i>created</i></div>
<div style="position:absolute;left:53px;top:481px;width:684px;height:14px;background:#ffffff;border-left:1px solid #ebebeb;border-bottom:1px solid #ebebeb;box-sizing:border-box"></div>
<div style="position:absolute;left:53px;top:480px;width:684px;height:1px;background:#ebebeb"></div>
<div style="position:absolute;left:232px;top:481px;width:1px;height:14px;background:#ebebeb"></div>
<div style="position:absolute;left:312px;top:481px;width:1px;height:14px;background:#ebebeb"></div>
<div style="position:absolute;left:514px;top:481px;width:1px;height:14px;background:#ebebeb"></div>
<svg width="10" height="10" viewBox="0 0 10 10" style="position:absolute;left:56px;top:482px"><rect x="3.5" y="3.5" width="6" height="6" fill="#404040"/><rect x="0.8" y="0.8" width="5.4" height="5.4" fill="#fff" stroke="#404040" stroke-width="1.2"/></svg>
<div class="t" style="left:71px;top:480px;line-height:14px"><i>object 820964</i></div>
<svg width="9" height="7" viewBox="0 0 9 7" style="position:absolute;left:317px;top:483.4px"><polyline points="0.7,3 3.2,5.5 7.8,0.9" fill="none" stroke="#43b99c" stroke-width="1.45"/></svg>
<div class="t" style="left:331px;top:480px;line-height:14px"><i>created</i></div>

<div style="left:40px;top:498px;width:698px;height:1px;background:#c4c4c4"></div>
<!-- bottom info -->
<div style="left:40px;top:502px;width:13px;height:18px;background:#ededb8"></div>
<div class="t" style="left:43.5px;top:501.5px;line-height:16px;font-size:12.5px;font-weight:bold;color:#ea9a1a;letter-spacing:0"><i>?</i></div>
<div class="t" style="left:55px;top:504px;line-height:14px"><i>Количество непринятых решений: 1</i></div>
<!-- bottom icons -->
<svg width="14" height="14" viewBox="0 0 14 14" style="left:660px;top:504px"><rect x="0.5" y="0.5" width="9" height="9" fill="none" stroke="#3b8fe0" stroke-width="1"/><rect x="3.5" y="3.5" width="9.5" height="9.5" fill="#fff" stroke="#3b8fe0" stroke-width="1"/><path d="M8.2 5.5 V11 M5.5 8.2 H11" stroke="#1f6fc5" stroke-width="1.3"/></svg>
<svg width="14" height="14" viewBox="0 0 14 14" style="left:680px;top:504px"><rect x="0.5" y="0.5" width="9" height="9" fill="none" stroke="#3b8fe0" stroke-width="1"/><rect x="3.5" y="3.5" width="9.5" height="9.5" fill="#fff" stroke="#3b8fe0" stroke-width="1"/><path d="M5.5 8.2 H11" stroke="#1f6fc5" stroke-width="1.3"/></svg>
<svg width="12" height="12" viewBox="0 0 12 12" style="left:701px;top:505px"><path d="M0.5 0.5 H11.5 L7 5 V11.5 L5 10.5 V5 Z" fill="#ee8c10"/></svg>
<svg width="12" height="12" viewBox="0 0 12 12" style="left:721px;top:505px"><path d="M0.3 0.5 H11.7 L7 5.2 V11.5 L5 10.5 V5.2 Z" fill="#2a86e0"/></svg>

<!-- status bar -->
<div style="left:5px;top:527px;width:739px;height:1px;background:#c8c8c8"></div>
<div style="left:8px;top:531px;width:713px;height:17px;box-sizing:border-box;border:1px solid #d4d4d4;background:#e6e6e6"></div>
<div style="left:723px;top:531px;width:18px;height:17px;box-sizing:border-box;border:1px solid #cdcdcd;background:#e3e3e3"></div>
<svg width="16" height="16" viewBox="0 0 16 16" style="left:724px;top:532px"><path d="M2 1.8 H10.3 V10.5" fill="none" stroke="#e88a3a" stroke-width="1"/><rect x="5.6" y="2.6" width="4.2" height="8" fill="#f4f4f4" stroke="#c8c8c8" stroke-width="0.5"/><path d="M1.5 1.4 L5.8 2.8 L5.9 14.2 L1.8 11.2 Z" fill="#de7a22"/><path d="M7 6.5 L10.5 3 V5.2 H15 V7.8 H10.5 V10 Z" fill="#2fb52f"/></svg>
</body></html>
